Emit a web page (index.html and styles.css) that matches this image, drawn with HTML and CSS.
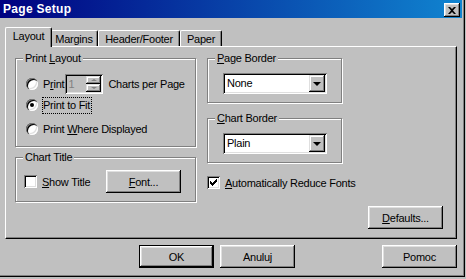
FILE: index.html
```html
<!DOCTYPE html>
<html lang="en">
<head>
    <meta charset="UTF-8">
    <title>Page Setup</title>
    <link rel="stylesheet" href="styles.css">
</head>
<body>
<div class="window">
    <div class="titlebar">
        <span class="title">Page Setup</span>
        <span class="close-btn">
            <svg width="8" height="7" viewBox="0 0 8 7"><path d="M0 0h2l2 2 2-2h2l-3 3.5 3 3.5h-2l-2-2-2 2h-2l3-3.5z" fill="#000"/></svg>
        </span>
    </div>

    <div class="tabs">
        <div class="tab active" style="width:47px">Layout</div>
        <div class="tab" style="width:47px">Margins</div>
        <div class="tab" style="width:82px">Header/Footer</div>
        <div class="tab" style="width:42px">Paper</div>
    </div>

    <div class="panel">
        <div class="panel-grid">
            <div class="col">
                <!-- Print Layout -->
                <div class="group group-print">
                    <span class="group-label">Print <u>L</u>ayout</span>
                    <div class="opt-row row-first">
                        <span class="radio"></span>
                        <span class="opt-text">P<u>r</u>int</span>
                        <span class="spinner">
                            <span class="spin-value">1</span>
                            <span class="spin-btns">
                                <span class="spin-btn"><span class="arr-up"></span></span>
                                <span class="spin-btn"><span class="arr-down"></span></span>
                            </span>
                        </span>
                        <span class="opt-text">Charts per Page</span>
                    </div>
                    <div class="opt-row row-second">
                        <span class="radio checked"></span>
                        <span class="opt-text focus">Print to Fit</span>
                    </div>
                    <div class="opt-row row-third">
                        <span class="radio"></span>
                        <span class="opt-text">Print <u>W</u>here Displayed</span>
                    </div>
                </div>

                <!-- Chart Title -->
                <div class="group group-small">
                    <span class="group-label">Chart Title</span>
                    <div class="check-row">
                        <span class="checkbox"></span>
                        <span class="opt-text"><u>S</u>how Title</span>
                        <button class="btn btn-font"><u>F</u>ont...</button>
                    </div>
                </div>
            </div>

            <div class="col">
                <div class="group group-combo">
                    <span class="group-label"><u>P</u>age Border</span>
                    <div class="combo">
                        <span class="combo-value">None</span>
                        <span class="combo-btn"><span class="arr-black"></span></span>
                    </div>
                </div>
                <div class="group group-combo group-gap">
                    <span class="group-label"><u>C</u>hart Border</span>
                    <div class="combo">
                        <span class="combo-value">Plain</span>
                        <span class="combo-btn"><span class="arr-black"></span></span>
                    </div>
                </div>
                <div class="check-row auto-row">
                    <span class="checkbox">
                        <svg width="7" height="7" viewBox="0 0 7 7"><path d="M0 2h1v1h1v1h1v-1h1v-1h1v-1h1v-1h1v3h-1v1h-1v1h-1v1h-1v1h-1v-1h-1v-1h-1z" fill="#000"/></svg>
                    </span>
                    <span class="opt-text"><u>A</u>utomatically Reduce Fonts</span>
                </div>
            </div>
        </div>

        <div class="panel-footer">
            <button class="btn"><u>D</u>efaults...</button>
        </div>
    </div>

    <div class="dialog-buttons">
        <button class="btn btn-default">OK</button>
        <button class="btn">Anuluj</button>
        <span class="spacer"></span>
        <button class="btn">Pomoc</button>
    </div>
</div>
</body>
</html>
```

FILE: styles.css
```css
* {
    box-sizing: border-box;
}
body {
    margin: 0;
    background-color: #c0c0c0;
    font-family: "Liberation Sans", Arial, sans-serif;
    font-size: 11px;
    letter-spacing: -0.25px;
    color: #000;
}
u {
    text-decoration: underline;
    text-underline-offset: 1px;
}
.window {
    width: 465px;
    height: 277px;
    background-color: #c0c0c0;
    box-shadow: inset -1px -1px #000, inset -2px -2px #808080;
}
.titlebar {
    width: 462px;
    height: 18px;
    display: flex;
    align-items: center;
    justify-content: space-between;
    padding: 0 2px 0 3px;
    background: linear-gradient(90deg, #000080, #1084d0);
}
.title {
    color: #fff;
    font-weight: bold;
    font-size: 12px;
    letter-spacing: 0.3px;
}
.close-btn {
    width: 16px;
    height: 14px;
    margin-top: 2px;
    display: flex;
    align-items: center;
    justify-content: center;
    background-color: #c0c0c0;
    box-shadow: inset -1px -1px #000, inset 1px 1px #fff, inset -2px -2px #808080, inset 2px 2px #dfdfdf;
}
.close-btn svg {
    margin-left: -1px;
}

/* tabs */
.tabs {
    display: flex;
    align-items: flex-end;
    height: 19px;
    margin-top: 9px;
    padding-left: 5px;
    position: relative;
    z-index: 2;
}
.tab {
    height: 16px;
    padding-top: 2px;
    text-align: center;
    border-top: 1px solid #fff;
    border-left: 1px solid #fff;
    border-right: 1px solid #000;
    border-top-left-radius: 2px;
    border-top-right-radius: 2px;
    box-shadow: inset -1px 0 #808080;
    background-color: #c0c0c0;
}
.tab.active {
    height: 20px;
    margin-bottom: -1px;
    padding-top: 2px;
    margin-right: -2px;
    position: relative;
    z-index: 3;
}
.tab.active + .tab {
    border-left: none;
    margin-left: 1px;
}

/* panel */
.panel {
    width: 452px;
    height: 193px;
    margin-left: 5px;
    border-top: 1px solid #fff;
    border-left: 1px solid #fff;
    border-right: 1px solid #000;
    border-bottom: 1px solid #000;
    box-shadow: inset -1px -1px #808080;
    padding: 11px 13px 9px 9px;
    display: flex;
    flex-direction: column;
}
.panel-grid {
    display: grid;
    grid-template-columns: 181px 135px;
    column-gap: 11px;
    height: 144px;
}
.col {
    display: flex;
    flex-direction: column;
}
.group {
    position: relative;
    border: 1px solid #808080;
    box-shadow: inset 1px 1px #fff, 1px 1px #fff;
}
.group-label {
    position: absolute;
    top: -7px;
    left: 7px;
    padding: 0 2px 0 2px;
    line-height: 13px;
    background-color: #c0c0c0;
}
.group-print {
    height: 89px;
    padding: 15px 0 0 10px;
}
.group-small {
    height: 45px;
    margin-top: 10px;
    padding: 12px 14px 0 8px;
}
.group-combo {
    height: 45px;
    padding: 14px 0 0 15px;
}
.group-gap {
    margin-top: 15px;
}

.opt-row {
    display: flex;
    align-items: center;
}
.row-first {
    height: 20px;
}
.row-second {
    height: 18px;
    margin-top: 2px;
}
.row-third {
    height: 18px;
    margin-top: 6px;
}
.opt-text {
    margin-left: 5px;
    white-space: nowrap;
}
.row-first .opt-text:last-child {
    margin-left: 5px;
}
.focus {
    margin-left: 4px;
    padding: 1px 1px 2px 0;
    border: 1px dotted #000;
}

.radio {
    width: 12px;
    height: 12px;
    flex: none;
    border-radius: 50%;
    background-color: #fff;
    position: relative;
    box-shadow: inset 1px 1px #808080, inset 2px 2px #000, inset -1px -1px #fff, inset -2px -2px #dfdfdf;
}
.radio.checked::after {
    content: "";
    position: absolute;
    left: 4px;
    top: 4px;
    width: 4px;
    height: 4px;
    border-radius: 50%;
    background-color: #000;
}

.checkbox {
    width: 13px;
    height: 13px;
    flex: none;
    display: flex;
    align-items: center;
    justify-content: center;
    background-color: #fff;
    box-shadow: inset 1px 1px #808080, inset -1px -1px #fff, inset 2px 2px #000, inset -2px -2px #dfdfdf;
}

/* spinner */
.spinner {
    width: 38px;
    height: 20px;
    margin-left: 1px;
    display: flex;
    justify-content: space-between;
    padding: 2px;
    background-color: #c0c0c0;
    box-shadow: inset 1px 1px #808080, inset -1px -1px #fff, inset 2px 2px #000, inset -2px -2px #dfdfdf;
}
.spin-value {
    color: #808080;
    padding-left: 1px;
    line-height: 16px;
}
.spin-btns {
    display: flex;
    flex-direction: column;
    width: 15px;
}
.spin-btn {
    height: 8px;
    display: flex;
    align-items: center;
    justify-content: center;
    box-shadow: inset -1px -1px #000, inset 1px 1px #dfdfdf, inset -2px -2px #808080, inset 2px 2px #fff;
}
.arr-up, .arr-down {
    width: 0;
    height: 0;
    border-left: 3px solid transparent;
    border-right: 3px solid transparent;
}
.arr-up {
    border-bottom: 2px solid #808080;
}
.arr-down {
    border-top: 2px solid #808080;
}

/* combo */
.combo {
    width: 104px;
    height: 21px;
    display: flex;
    justify-content: space-between;
    padding: 2px;
    background-color: #fff;
    box-shadow: inset 1px 1px #808080, inset -1px -1px #fff, inset 2px 2px #000, inset -2px -2px #dfdfdf;
}
.combo-value {
    padding-left: 2px;
    line-height: 17px;
    font-size: 11px;
}
.combo-btn {
    width: 16px;
    height: 17px;
    display: flex;
    align-items: center;
    justify-content: center;
    background-color: #c0c0c0;
    box-shadow: inset -1px -1px #000, inset 1px 1px #dfdfdf, inset -2px -2px #808080, inset 2px 2px #fff;
}
.arr-black {
    width: 0;
    height: 0;
    border-left: 4px solid transparent;
    border-right: 4px solid transparent;
    border-top: 4px solid #000;
    margin-top: 1px;
}

.check-row {
    display: flex;
    align-items: center;
    height: 23px;
}
.auto-row {
    margin-top: 13px;
    height: 13px;
}
.btn-font {
    margin-left: auto;
}

/* buttons */
.btn {
    width: 75px;
    height: 23px;
    padding: 0;
    border: none;
    font-family: inherit;
    font-size: 11px;
    letter-spacing: -0.25px;
    color: #000;
    background-color: #c0c0c0;
    box-shadow: inset -1px -1px #000, inset 1px 1px #fff, inset -2px -2px #808080, inset 2px 2px #dfdfdf;
}
.btn-default {
    border: 1px solid #000;
}
.panel-footer {
    display: flex;
    justify-content: flex-end;
    margin-top: 4px;
}
.dialog-buttons {
    display: flex;
    margin-top: 6px;
    padding-left: 139px;
    width: 457px;
    gap: 6px;
}
.spacer {
    flex: 1;
}
```
